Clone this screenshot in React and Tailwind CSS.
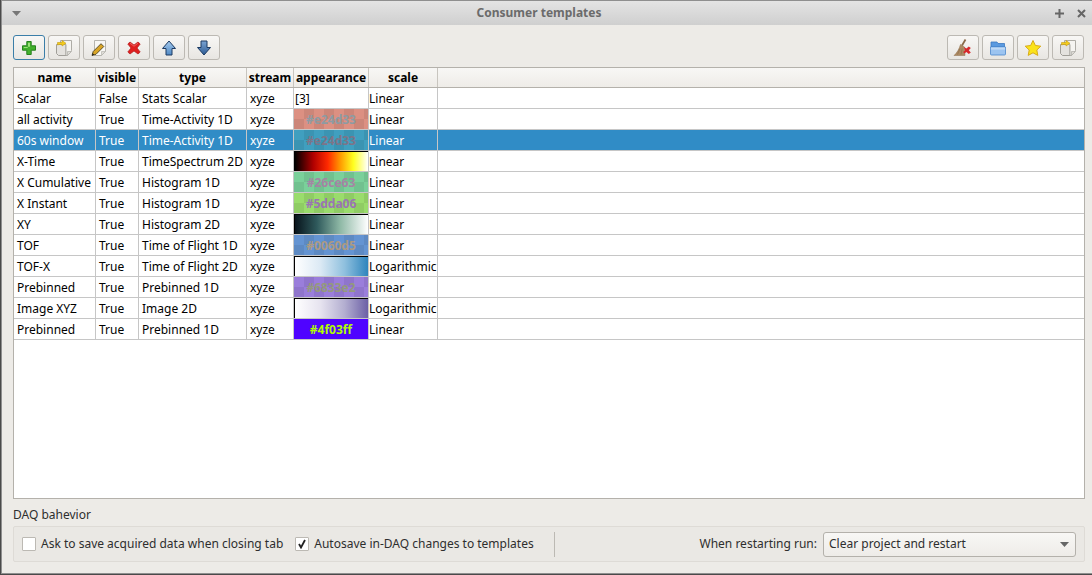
import React from 'react';

const CHECKER =
  'bg-[conic-gradient(rgba(0,0,0,0.07)_25%,transparent_0_50%,rgba(0,0,0,0.07)_0_75%,transparent_0)] bg-size-[20px_20px]';

const columns = [
  { label: 'name', width: 'w-[82px]' },
  { label: 'visible', width: 'w-[43px]' },
  { label: 'type', width: 'w-[108px]' },
  { label: 'stream', width: 'w-[47px]' },
  { label: 'appearance', width: 'w-[75px]' },
  { label: 'scale', width: 'w-[69px]' },
];

const rows = [
  { name: 'Scalar', visible: 'False', type: 'Stats Scalar', text: '[3]', scale: 'Linear' },
  { name: 'all activity', visible: 'True', type: 'Time-Activity 1D', hex: '#e24d33', swatch: `bg-[#dc9082] ${CHECKER}`, hexColor: 'text-[#8c9ba3]', scale: 'Linear' },
  { name: '60s window', visible: 'True', type: 'Time-Activity 1D', hex: '#e24d33', swatch: `bg-[#409fbf] ${CHECKER}`, hexColor: 'text-[#7d7488]', scale: 'Linear', selected: true },
  { name: 'X-Time', visible: 'True', type: 'TimeSpectrum 2D', swatch: 'bg-[linear-gradient(to_right,#000,#b00000_25%,#ff2a00_45%,#ff9a00_62%,#ffff20_80%,#fff)]', framed: true, scale: 'Linear' },
  { name: 'X Cumulative', visible: 'True', type: 'Histogram 1D', hex: '#26ce63', swatch: `bg-[#7ad09a] ${CHECKER}`, hexColor: 'text-[#a584a4]', scale: 'Linear' },
  { name: 'X Instant', visible: 'True', type: 'Histogram 1D', hex: '#5dda06', swatch: `bg-[#9adc6c] ${CHECKER}`, hexColor: 'text-[#9a74b4]', scale: 'Linear' },
  { name: 'XY', visible: 'True', type: 'Histogram 2D', swatch: 'bg-[linear-gradient(to_right,#08141c,#2f5a5c_30%,#8fb9a6_62%,#fff)]', framed: true, scale: 'Linear' },
  { name: 'TOF', visible: 'True', type: 'Time of Flight 1D', hex: '#0060d5', swatch: `bg-[#6494d2] ${CHECKER}`, hexColor: 'text-[#ad9a82]', scale: 'Linear' },
  { name: 'TOF-X', visible: 'True', type: 'Time of Flight 2D', swatch: 'bg-[linear-gradient(to_right,#fff,#dbe9f4_35%,#8fc0de_68%,#2f85bd)]', framed: true, scale: 'Logarithmic' },
  { name: 'Prebinned', visible: 'True', type: 'Prebinned 1D', hex: '#6833e2', swatch: `bg-[#9a7edb] ${CHECKER}`, hexColor: 'text-[#949a7c]', scale: 'Linear' },
  { name: 'Image XYZ', visible: 'True', type: 'Image 2D', swatch: 'bg-[linear-gradient(to_right,#fff,#e6e3ef_35%,#b3aed0_68%,#6c60a6)]', framed: true, scale: 'Logarithmic' },
  { name: 'Prebinned', visible: 'True', type: 'Prebinned 1D', hex: '#4f03ff', swatch: 'bg-[#4f03ff]', hexColor: 'text-[#b0fc00]', scale: 'Linear' },
];

const PlusIcon = () => (
  <svg width="16" height="16" viewBox="0 0 16 16">
    <path d="M5.800 1.500h4.400v4.300h4.300v4.400h-4.300v4.300H5.800v-4.300H1.500V5.800h4.300z" fill="#42b02c" stroke="#27801f" strokeWidth="1" strokeLinejoin="round" />
    <path d="M7 2.800h2v3.900H7zM2.800 7h3.900v1H2.800z" fill="#9ae078" />
  </svg>
);

const CopyIcon = () => (
  <svg width="20" height="20" viewBox="0 0 20 20">
    <path d="M2.500 6.500h9.500v11H4.500l-2-2z" fill="#e4e2de" stroke="#a09e98" />
    <path d="M6.500 2.500h11v10l-4 5h-1.500v-11H6.500z" fill="#f5f4f1" stroke="#aeaca6" />
    <path d="M13.500 17.500v-4h4z" fill="#dcdad5" stroke="#aeaca6" strokeWidth="0.700" />
    <path d="M3.500 7V4.500h4.500V2.500l4 2.800-4 2.700V6.500H5z" fill="#f4cb1c" stroke="#c49c10" strokeWidth="0.600" />
  </svg>
);

const EditIcon = () => (
  <svg width="20" height="20" viewBox="0 0 20 20">
    <path d="M5.500 2.500h11v11l-4 4h-7z" fill="#f8f7f4" stroke="#b6b4ae" />
    <path d="M12.500 17.500v-4h4z" fill="#dfddd8" stroke="#b6b4ae" strokeWidth="0.700" />
    <path d="M3 17.500l1.200-4L12 5.700 14.800 8.500 7 16.300z" fill="#d9a526" stroke="#4f4420" strokeWidth="0.900" strokeLinejoin="round" />
    <path d="M3 17.500l.7-2.200 1.500 1.500z" fill="#1c1c1c" />
  </svg>
);

const DeleteIcon = () => (
  <svg width="16" height="16" viewBox="0 0 16 16">
    <path d="M1.800 4L4 2l4 3 4-3 2.200 2L11 8l3.200 4L12 14l-4-3-4 3-2.200-2L5 8z" fill="#df1f1f" stroke="#b01a1a" strokeWidth="0.700" strokeLinejoin="round" />
    <path d="M4 3.200L8 6.200l4-3" fill="none" stroke="#f0807a" strokeWidth="0.700" />
  </svg>
);

const ArrowIcon = ({ down }) => (
  <svg width="16" height="16" viewBox="0 0 16 16">
    <defs>
      <linearGradient id={down ? 'arrowDown' : 'arrowUp'} x1="0" y1="0" x2="0" y2="1">
        <stop offset="0" stopColor={down ? '#7aa4d4' : '#a6cbee'} />
        <stop offset="1" stopColor={down ? '#2c5a92' : '#5089c4'} />
      </linearGradient>
    </defs>
    <path
      d={down ? 'M8 15L1.500 7.500H5V1h6v6.500h3.500z' : 'M8 1l6.500 7.500H11V15H5V8.500H1.500z'}
      fill={`url(#${down ? 'arrowDown' : 'arrowUp'})`}
      stroke="#1c3a62"
      strokeWidth="1"
      strokeLinejoin="round"
    />
  </svg>
);

const BroomIcon = () => (
  <svg width="20" height="18" viewBox="0 0 20 18">
    <path d="M12.500 0.500L9 6.500" stroke="#8a6a48" strokeWidth="1.800" />
    <path d="M7.500 5.500l4 2.500.5 8.500H1C4 14 6.200 10 7.500 5.500z" fill="#ad8a62" stroke="#8c6c4a" strokeWidth="0.500" />
    <path d="M4.500 15.500l2.500-6M8 15.500l1.200-6" stroke="#8f6e4c" strokeWidth="0.700" />
    <path d="M11 8l2.400 1.400L15.800 7.500l2 1.600-2 2.100 2 2.300-2 1.500-2.400-2-2 1.600-1.200-1.500 1.800-1.700z" fill="#d8282c" />
  </svg>
);

const FolderIcon = () => (
  <svg width="18" height="16" viewBox="0 0 18 16">
    <path d="M2 7V2h6l1 1.500h6.500V7z" fill="#5a9ae0" stroke="#3c78c0" strokeWidth="0.800" />
    <path d="M1.500 7h15v7a1 1 0 0 1-1 1h-13a1 1 0 0 1-1-1z" fill="#9cc4f0" stroke="#4a86cc" strokeWidth="0.800" />
    <path d="M1.900 7.400h14.200v2.200H1.900z" fill="#c0daf6" />
  </svg>
);

const StarIcon = () => (
  <svg width="18" height="18" viewBox="0 0 18 18">
    <path d="M9 1.500l2.400 5 5.400.7-4 3.800 1 5.400L9 13.800l-4.800 2.600 1-5.400-4-3.800 5.400-.7z" fill="#fbe31a" stroke="#d8ab18" strokeWidth="1" strokeLinejoin="round" />
  </svg>
);

const ToolButton = ({ active, children }) => (
  <button
    className={`flex h-[25px] w-[32px] items-center justify-center rounded-[3px] border bg-gradient-to-b from-[#f8f7f5] to-[#e8e6e2] ${
      active ? 'border-[#3b7ea8]' : 'border-[#bcb9b3]'
    }`}
  >
    {children}
  </button>
);

const Swatch = ({ row }) => {
  if (row.text) return <span className="pt-px pl-px">{row.text}</span>;
  return (
    <div
      className={`flex h-full w-full items-center justify-center pt-px font-bold ${row.swatch} ${row.hexColor || ''} ${
        row.framed ? 'border-t border-l border-black' : ''
      }`}
    >
      {row.hex}
    </div>
  );
};

const TableRow = ({ row }) => {
  const cell = 'flex h-full shrink-0 items-center border-r border-[#c6c6c6] whitespace-nowrap';
  return (
    <div className={`flex h-[21px] border-b border-[#c6c6c6] ${row.selected ? 'bg-[#308cc6] text-white' : 'text-black'}`}>
      <div className={`${cell} w-[82px] pt-px pl-[3px]`}>{row.name}</div>
      <div className={`${cell} w-[43px] pt-px pl-[3px]`}>{row.visible}</div>
      <div className={`${cell} w-[108px] pt-px pl-[3px]`}>{row.type}</div>
      <div className={`${cell} w-[47px] pt-px pl-[3px]`}>xyze</div>
      <div className={`${cell} w-[75px]`}>
        <Swatch row={row} />
      </div>
      <div className={`${cell} w-[69px] pt-px`}>{row.scale}</div>
    </div>
  );
};

export default function App() {
  return (
    <div className="h-[575px] w-[1092px] overflow-hidden bg-[#4a4a4a] font-['Noto_Sans',sans-serif] text-[12px] text-[#2e2e2e]">
      <div className="ml-px flex h-[574px] w-[1091px] flex-col border-t border-b border-l border-[#8f8f8f] bg-[#edebe7]">
        <div className="relative flex h-[24px] shrink-0 items-center justify-center bg-gradient-to-b from-[#e4e4e4] to-[#cfcfcf] pr-[16px] text-[#6b6b6b]">
          <span className="font-bold">Consumer templates</span>
          <svg width="9" height="5" viewBox="0 0 9 5" className="absolute top-[10px] left-[10px]">
            <path d="M0 0h9L4.500 5z" fill="#777" />
          </svg>
          <svg width="9" height="9" viewBox="0 0 9 9" className="absolute top-[8px] right-[28px]">
            <path d="M4.500 0v9M0 4.500h9" stroke="#666" strokeWidth="2" />
          </svg>
          <svg width="9" height="9" viewBox="0 0 9 9" className="absolute top-[8px] right-[6px]">
            <path d="M1 1l7 7M8 1l-7 7" stroke="#666" strokeWidth="2" />
          </svg>
        </div>

        <div className="flex flex-1 flex-col pr-[7px] pl-[11px]">
          <div className="mt-[10px] flex shrink-0 justify-between">
            <div className="flex gap-[3px]">
              <ToolButton active><PlusIcon /></ToolButton>
              <ToolButton><CopyIcon /></ToolButton>
              <ToolButton><EditIcon /></ToolButton>
              <ToolButton><DeleteIcon /></ToolButton>
              <ToolButton><ArrowIcon /></ToolButton>
              <ToolButton><ArrowIcon down /></ToolButton>
            </div>
            <div className="mr-px flex gap-[3px]">
              <ToolButton><BroomIcon /></ToolButton>
              <ToolButton><FolderIcon /></ToolButton>
              <ToolButton><StarIcon /></ToolButton>
              <ToolButton><CopyIcon /></ToolButton>
            </div>
          </div>

          <div className="mt-[7px] flex h-[432px] shrink-0 flex-col border border-[#b4b1ab] bg-white">
            <div className="flex h-[20px] shrink-0 border-b border-[#b4b1ab] bg-gradient-to-b from-[#f8f7f5] to-[#eeece8]">
              {columns.map((col) => (
                <div
                  key={col.label}
                  className={`flex shrink-0 items-center justify-center border-r border-[#c8c5bf] font-bold text-black ${col.width}`}
                >
                  {col.label}
                </div>
              ))}
            </div>
            {rows.map((row, i) => (
              <TableRow key={i} row={row} />
            ))}
          </div>

          <div className="mt-[8px] shrink-0 leading-[16px]">DAQ bahevior</div>

          <div className="mt-[3px] flex h-[36px] shrink-0 items-center rounded-[2px] border border-[#dedbd6] bg-[#eae8e4] px-[8px]">
            <span className="h-[14px] w-[14px] shrink-0 rounded-[1px] border border-[#bcb9b3] bg-white" />
            <span className="ml-[5px]">Ask to save acquired data when closing tab</span>
            <span className="ml-[12px] flex h-[14px] w-[14px] shrink-0 items-center justify-center rounded-[1px] border border-[#bcb9b3] bg-white">
              <svg width="10" height="10" viewBox="0 0 10 10">
                <path d="M2 5l2 3.500L8 1" fill="none" stroke="#222" strokeWidth="1.800" />
              </svg>
            </span>
            <span className="ml-[5px]">Autosave in-DAQ changes to templates</span>
            <span className="ml-[20px] h-[25px] w-px bg-[#bcb9b3]" />
            <span className="ml-auto">When restarting run:</span>
            <div className="ml-[6px] flex h-[25px] w-[253px] items-center justify-between rounded-[3px] border border-[#b4b1ab] bg-gradient-to-b from-[#f8f7f5] to-[#eeece8] pr-[6px] pl-[5px]">
              <span>Clear project and restart</span>
              <svg width="9" height="5" viewBox="0 0 9 5">
                <path d="M0 0h9L4.500 5z" fill="#666" />
              </svg>
            </div>
          </div>
        </div>
      </div>
    </div>
  );
}
